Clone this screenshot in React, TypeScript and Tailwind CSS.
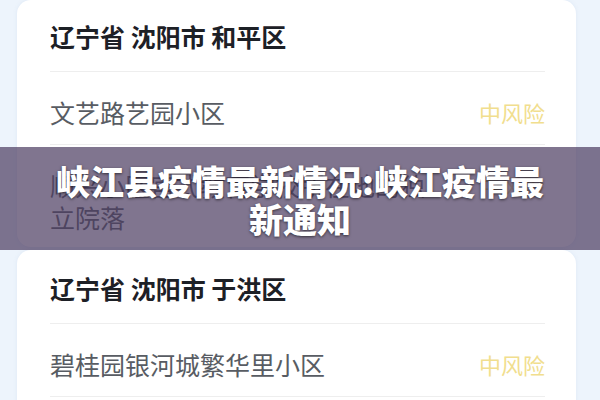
import React from 'react';

interface Place {
  name: string;
  level: string;
}

interface District {
  title: string;
  places: Place[];
}

const districts: District[] = [
  {
    title: '辽宁省 沈阳市 和平区',
    places: [
      { name: '文艺路艺园小区', level: '中风险' },
      { name: '顺兴小区宫式教育学校所在地的独立院落', level: '中风险' },
    ],
  },
  {
    title: '辽宁省 沈阳市 于洪区',
    places: [
      { name: '碧桂园银河城繁华里小区', level: '中风险' },
      { name: '于洪新城小区', level: '中风险' },
    ],
  },
];

function DistrictCard({ district, headTop }: { district: District; headTop: string }) {
  return (
    <div className="mx-[17px] w-[559px] rounded-[14px] bg-white shadow-[0_0_4px_rgba(120,150,190,0.12)] pl-[33px] pr-[31px]">
      <div className={`${headTop} pb-[19px] text-[25px] leading-[32px] font-bold text-[#1d2026]`}>
        {district.title}
      </div>
      {district.places.map((p, i) => (
        <div
          key={p.name}
          className={`flex items-start justify-between border-t border-[#eeeeee] pt-[24px] ${
            i === district.places.length - 1 ? 'pb-[14px]' : 'pb-[16px]'
          }`}
        >
          <span className="w-[390px] text-[25px] leading-[32px] text-[#585c63]">{p.name}</span>
          <span className="text-[22px] leading-[32px] text-[#f1de8e]">{p.level}</span>
        </div>
      ))}
    </div>
  );
}

export default function App() {
  return (
    <div className="relative h-[400px] w-[600px] overflow-hidden bg-[#edf4fc] font-['Noto_Sans_CJK_SC','Noto_Sans',sans-serif]">
      <div className="flex flex-col gap-[3px]">
        <DistrictCard district={districts[0]} headTop="pt-[20px]" />
        <DistrictCard district={districts[1]} headTop="pt-[22px]" />
      </div>

      {/* headline band over the list */}
      <div className="absolute left-0 right-0 top-[147px] h-[103px] bg-[#4a3a60]/70 pt-[15px] text-center">
        <h1 className="text-[34px] leading-[38px] font-black text-white [text-shadow:0_1px_3px_rgba(0,0,0,0.6)]">
          峡江县疫情最新情况:峡江疫情最
          <br />
          新通知
        </h1>
      </div>
    </div>
  );
}
